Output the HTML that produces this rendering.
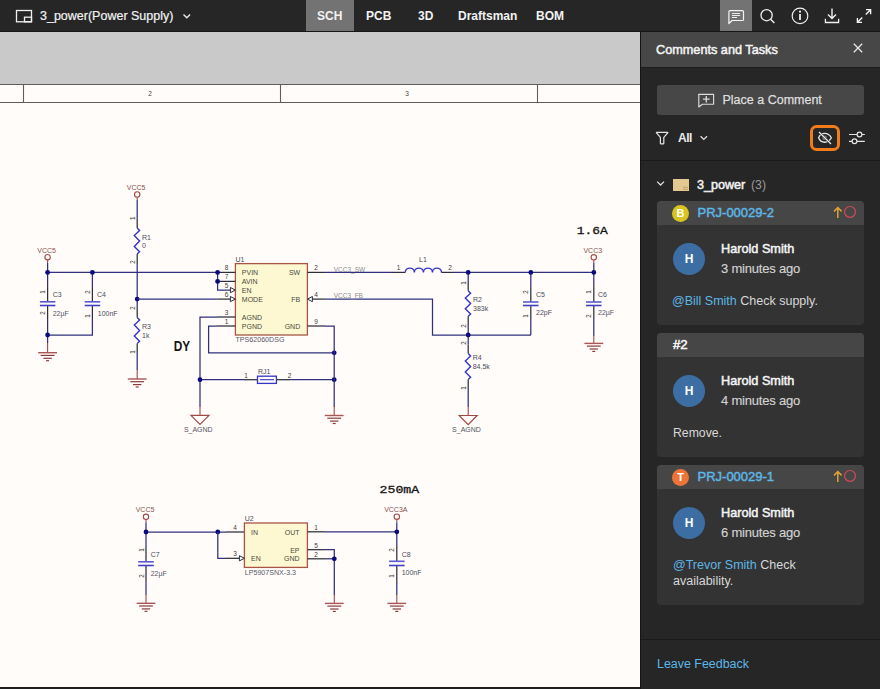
<!DOCTYPE html>
<html><head><meta charset="utf-8">
<style>
*{box-sizing:border-box;margin:0;padding:0}
html,body{width:880px;height:689px;overflow:hidden;background:#fffcf9;font-family:"Liberation Sans",sans-serif}
.a{position:absolute;white-space:nowrap}
#top{position:absolute;left:0;top:0;width:880px;height:32px;background:#262626;border-bottom:1px solid #151515}
#band{position:absolute;left:0;top:32px;width:640px;height:52px;background:#c9c9c9}
#panel{position:absolute;left:640px;top:32px;width:240px;height:657px;background:#262626;border-left:1px solid #141414}
#bot{position:absolute;left:0;top:687px;width:640px;height:2px;background:#1f1f1f}
.tab{position:absolute;top:1px;height:31px;line-height:31px;color:#f2f2f2;font-weight:bold;font-size:12px}
.card{position:absolute;left:657px;width:207px;background:#333;border-radius:4px;overflow:hidden}
.ch{height:24px;background:#464646;position:relative}
.av{position:absolute;width:32px;height:32px;border-radius:50%;background:#3d6ea3;color:#fff;font-weight:bold;font-size:12px;text-align:center;line-height:32px}
.nm{position:absolute;color:#f4f4f4;font-size:12.7px;-webkit-text-stroke:0.5px #f4f4f4}
.tm{position:absolute;color:#d2d2d2;font-size:13px;letter-spacing:-0.2px;-webkit-text-stroke:0.15px #d2d2d2}
.bd{position:absolute;color:#d8d8d8;font-size:12.5px}
.ln{color:#5db6e6}
</style></head><body>
<div id="top">
  <svg class="a" style="left:0;top:0" width="880" height="31" overflow="visible">
    <rect x="16.5" y="10.5" width="15" height="11.3" fill="none" stroke="#f0f0f0" stroke-width="1.3"/>
    <rect x="24.5" y="17.2" width="7" height="4.6" fill="none" stroke="#f0f0f0" stroke-width="1.3"/>
    <path d="M183.5 14.5 L186.8 17.8 L190.1 14.5" fill="none" stroke="#e8e8e8" stroke-width="1.4"/>
    <rect x="306" y="0" width="48" height="31" fill="#737373"/>
    <rect x="720" y="0" width="32" height="31" fill="#737373"/>
    <path d="M729.9 10.6 H742.4 Q743.5 10.6 743.5 11.7 V19.4 Q743.5 20.5 742.4 20.5 H732 L728.9 23.5 V11.7 Q728.9 10.6 729.9 10.6 Z" fill="none" stroke="#f4f4f4" stroke-width="1.2" stroke-linejoin="round"/>
    <path d="M731.9 13.5 H740.1 M731.9 15.5 H740.1 M731.9 17.5 H737" stroke="#f4f4f4" stroke-width="0.95"/>
    <circle cx="766.6" cy="15.2" r="5.6" fill="none" stroke="#f0f0f0" stroke-width="1.3"/>
    <path d="M770.6 19.2 L774.4 23" stroke="#f0f0f0" stroke-width="1.4"/>
    <circle cx="800" cy="15.9" r="7.8" fill="none" stroke="#f0f0f0" stroke-width="1.2"/>
    <rect x="799.1" y="14" width="1.8" height="6" fill="#f0f0f0"/>
    <circle cx="800" cy="11.7" r="1.1" fill="#f0f0f0"/>
    <path d="M832 8.5 V18.4 M828 14.6 L832 18.6 L836 14.6" fill="none" stroke="#f0f0f0" stroke-width="1.4"/>
    <path d="M825.4 18.8 V22.5 H838.6 V18.8" fill="none" stroke="#f0f0f0" stroke-width="1.3"/>
    <path d="M866 9.6 H870.6 V14.2 M870.2 10 L865.8 14.4 M857.4 18 V22.4 H862 M857.8 22 L862.3 17.5" fill="none" stroke="#f4f4f4" stroke-width="1.4"/>
  </svg>
  <div class="a" style="left:40px;top:1px;height:31px;line-height:31px;color:#f2f2f2;font-size:12.5px;-webkit-text-stroke:0.2px #f2f2f2">3_power(Power Supply)</div>
  <div class="tab" style="left:317px">SCH</div>
  <div class="tab" style="left:366px">PCB</div>
  <div class="tab" style="left:418px">3D</div>
  <div class="tab" style="left:458px">Draftsman</div>
  <div class="tab" style="left:536px">BOM</div>
</div>
<div id="band"></div>
<svg id="sch" class="a" style="left:0;top:0" width="640" height="689" font-family="Liberation Sans">
<path d="M0 84.5 H640 M0 102.5 H640 M23.5 84 V103 M280.5 84 V103 M537.5 84 V103" stroke="#5e5e5e" stroke-width="1.1" fill="none"/>
<text x="150.0" y="96.2" font-size="6.5" fill="#404040" text-anchor="middle" >2</text>
<text x="407.0" y="96.2" font-size="6.5" fill="#404040" text-anchor="middle" >3</text>
<circle cx="47.6" cy="257.2" r="2.7" fill="none" stroke="#a04a48" stroke-width="1.1"/>
<text x="46.6" y="252.6" font-size="7" fill="#8a5050" text-anchor="middle" >VCC5</text>
<path d="M47.6 259.9 L47.6 263.0" stroke="#a04a48" stroke-width="1.1" fill="none"/>
<path d="M47.6 263.0 L47.6 272.4" stroke="#30307e" stroke-width="1.25" fill="none"/>
<path d="M47.6 272.4 L217.6 272.4" stroke="#30307e" stroke-width="1.25" fill="none"/>
<path d="M47.6 272.4 L47.6 287.0" stroke="#30307e" stroke-width="1.25" fill="none"/>
<path d="M47.6 287.0 L47.6 301.8" stroke="#2e2e3a" stroke-width="1.25" fill="none"/>
<path d="M47.6 305.0 L47.6 319.0" stroke="#2e2e3a" stroke-width="1.25" fill="none"/>
<path d="M47.6 319.0 L47.6 343.0" stroke="#30307e" stroke-width="1.25" fill="none"/>
<path d="M47.6 343.0 L47.6 352.7" stroke="#a04a48" stroke-width="1.1" fill="none"/>
<path d="M39.9 301.8 L55.4 301.8" stroke="#5a5ad0" stroke-width="1.6" fill="none"/>
<path d="M39.9 305.5 L55.4 305.5" stroke="#4040c0" stroke-width="1.6" fill="none"/>
<path d="M38.2 352.7 L57.0 352.7" stroke="#a85656" stroke-width="1.4" fill="none"/>
<path d="M40.7 355.4 L54.5 355.4" stroke="#8a3c3c" stroke-width="1.2" fill="none"/>
<path d="M43.4 358.3 L51.8 358.3" stroke="#8a3c3c" stroke-width="1.2" fill="none"/>
<path d="M46.1 360.7 L49.1 360.7" stroke="#8a3c3c" stroke-width="1.2" fill="none"/>
<path d="M92.4 272.4 L92.4 287.0" stroke="#30307e" stroke-width="1.25" fill="none"/>
<path d="M92.4 287.0 L92.4 301.8" stroke="#2e2e3a" stroke-width="1.25" fill="none"/>
<path d="M92.4 305.0 L92.4 319.0" stroke="#2e2e3a" stroke-width="1.25" fill="none"/>
<path d="M92.4 319.0 L92.4 335.0 L47.6 335.0" stroke="#30307e" stroke-width="1.25" fill="none"/>
<path d="M84.7 301.8 L100.2 301.8" stroke="#5a5ad0" stroke-width="1.6" fill="none"/>
<path d="M84.7 305.5 L100.2 305.5" stroke="#4040c0" stroke-width="1.6" fill="none"/>
<circle cx="47.6" cy="272.4" r="2.4" fill="#0a0a80"/>
<circle cx="92.4" cy="272.4" r="2.4" fill="#0a0a80"/>
<circle cx="47.6" cy="335.0" r="2.4" fill="#0a0a80"/>
<text x="52.7" y="296.7" font-size="7" fill="#4d4d5a" text-anchor="start" >C3</text>
<text x="52.7" y="316.0" font-size="7" fill="#556" text-anchor="start" >22µF</text>
<text x="97.0" y="296.7" font-size="7" fill="#4d4d5a" text-anchor="start" >C4</text>
<text x="97.8" y="316.0" font-size="7" fill="#4d4d5a" text-anchor="start" >100nF</text>
<text x="0" y="0" font-size="6.3" fill="#3c3c3c" transform="translate(45.0,292.0) rotate(-90)" text-anchor="middle">1</text>
<text x="0" y="0" font-size="6.3" fill="#3c3c3c" transform="translate(45.0,313.0) rotate(-90)" text-anchor="middle">2</text>
<text x="0" y="0" font-size="6.3" fill="#3c3c3c" transform="translate(90.0,292.0) rotate(-90)" text-anchor="middle">2</text>
<text x="0" y="0" font-size="6.3" fill="#3c3c3c" transform="translate(90.0,316.0) rotate(-90)" text-anchor="middle">1</text>
<circle cx="137.2" cy="194.5" r="2.7" fill="none" stroke="#a04a48" stroke-width="1.1"/>
<text x="136.2" y="189.9" font-size="7" fill="#8a5050" text-anchor="middle" >VCC5</text>
<path d="M137.2 197.2 L137.2 200.0" stroke="#a04a48" stroke-width="1.1" fill="none"/>
<path d="M137.2 200.0 L137.2 218.3" stroke="#30307e" stroke-width="1.25" fill="none"/>
<path d="M137.2 218.3 L137.2 228.0" stroke="#2e2e3a" stroke-width="1.25" fill="none"/>
<path d="M137.2 228.0 L139.6 230.5 L134.3 235.5 L139.6 241.0 L134.3 246.4 L139.6 251.7 L137.2 254.0" stroke="#3434c8" stroke-width="1.4" fill="none"/>
<path d="M137.2 254.0 L137.2 264.0" stroke="#2e2e3a" stroke-width="1.25" fill="none"/>
<path d="M137.2 264.0 L137.2 307.0" stroke="#30307e" stroke-width="1.25" fill="none"/>
<text x="142.0" y="239.5" font-size="7" fill="#4d4d5a" text-anchor="start" >R1</text>
<text x="142.0" y="247.7" font-size="7" fill="#4d4d5a" text-anchor="start" >0</text>
<text x="0" y="0" font-size="6.3" fill="#3c3c3c" transform="translate(134.5,218.3) rotate(-90)" text-anchor="middle">1</text>
<text x="0" y="0" font-size="6.3" fill="#3c3c3c" transform="translate(134.5,262.0) rotate(-90)" text-anchor="middle">2</text>
<path d="M137.2 307.0 L137.2 317.6" stroke="#2e2e3a" stroke-width="1.25" fill="none"/>
<path d="M137.2 317.6 L139.6 320.1 L134.3 325.1 L139.6 330.6 L134.3 336.0 L139.6 341.3 L137.2 343.6" stroke="#3434c8" stroke-width="1.4" fill="none"/>
<path d="M137.2 343.6 L137.2 353.0" stroke="#2e2e3a" stroke-width="1.25" fill="none"/>
<path d="M137.2 353.0 L137.2 370.0" stroke="#30307e" stroke-width="1.25" fill="none"/>
<path d="M137.2 370.0 L137.2 379.0" stroke="#a04a48" stroke-width="1.1" fill="none"/>
<path d="M127.8 379.0 L146.6 379.0" stroke="#a85656" stroke-width="1.4" fill="none"/>
<path d="M130.3 381.7 L144.1 381.7" stroke="#8a3c3c" stroke-width="1.2" fill="none"/>
<path d="M133.0 384.6 L141.4 384.6" stroke="#8a3c3c" stroke-width="1.2" fill="none"/>
<path d="M135.7 387.0 L138.7 387.0" stroke="#8a3c3c" stroke-width="1.2" fill="none"/>
<circle cx="137.2" cy="299.1" r="2.4" fill="#0a0a80"/>
<path d="M137.2 299.1 L217.3 299.1" stroke="#30307e" stroke-width="1.25" fill="none"/>
<text x="142.0" y="329.0" font-size="7" fill="#4d4d5a" text-anchor="start" >R3</text>
<text x="142.0" y="338.0" font-size="7" fill="#4d4d5a" text-anchor="start" >1k</text>
<text x="0" y="0" font-size="6.3" fill="#3c3c3c" transform="translate(134.5,308.0) rotate(-90)" text-anchor="middle">2</text>
<text x="0" y="0" font-size="6.3" fill="#3c3c3c" transform="translate(134.5,352.0) rotate(-90)" text-anchor="middle">1</text>
<rect x="235.4" y="263.6" width="72.0" height="71.4" fill="#fdf8d2" stroke="#a85545" stroke-width="1.3"/>
<text x="235.5" y="262.0" font-size="7" fill="#4d4d5a" text-anchor="start" >U1</text>
<text x="235.5" y="342.3" font-size="7.1" fill="#5a5a6a" text-anchor="start" >TPS62060DSG</text>
<text x="241.8" y="275.0" font-size="7" fill="#4a4a40" text-anchor="start" >PVIN</text>
<text x="226.5" y="270.2" font-size="6.5" fill="#3c3c3c" text-anchor="middle" >8</text>
<text x="241.8" y="284.0" font-size="7" fill="#4a4a40" text-anchor="start" >AVIN</text>
<text x="226.5" y="279.2" font-size="6.5" fill="#3c3c3c" text-anchor="middle" >7</text>
<text x="241.8" y="292.7" font-size="7" fill="#4a4a40" text-anchor="start" >EN</text>
<text x="226.5" y="287.9" font-size="6.5" fill="#3c3c3c" text-anchor="middle" >5</text>
<text x="241.8" y="301.7" font-size="7" fill="#4a4a40" text-anchor="start" >MODE</text>
<text x="226.5" y="296.9" font-size="6.5" fill="#3c3c3c" text-anchor="middle" >6</text>
<text x="241.8" y="319.6" font-size="7" fill="#4a4a40" text-anchor="start" >AGND</text>
<text x="226.5" y="314.8" font-size="6.5" fill="#3c3c3c" text-anchor="middle" >3</text>
<text x="241.8" y="328.6" font-size="7" fill="#4a4a40" text-anchor="start" >PGND</text>
<text x="226.5" y="323.8" font-size="6.5" fill="#3c3c3c" text-anchor="middle" >1</text>
<text x="300.2" y="275.0" font-size="7" fill="#4a4a40" text-anchor="end" >SW</text>
<text x="316.0" y="270.2" font-size="6.5" fill="#3c3c3c" text-anchor="middle" >2</text>
<text x="300.2" y="301.7" font-size="7" fill="#4a4a40" text-anchor="end" >FB</text>
<text x="316.0" y="296.9" font-size="6.5" fill="#3c3c3c" text-anchor="middle" >4</text>
<text x="300.2" y="328.6" font-size="7" fill="#4a4a40" text-anchor="end" >GND</text>
<text x="316.0" y="323.8" font-size="6.5" fill="#3c3c3c" text-anchor="middle" >9</text>
<path d="M217.6 272.4 L235.4 272.4" stroke="#2e2e3a" stroke-width="1.25" fill="none"/>
<path d="M217.6 281.4 L235.4 281.4" stroke="#2e2e3a" stroke-width="1.25" fill="none"/>
<path d="M217.6 272.4 L217.6 290.1 L230.4 290.1" stroke="#30307e" stroke-width="1.25" fill="none"/>
<path d="M230.4 287.5 L235.4 290.1 L230.4 292.7 Z" fill="#fffcf8" stroke="#2e2e3a" stroke-width="1"/>
<path d="M217.3 299.1 L230.4 299.1" stroke="#2e2e3a" stroke-width="1.25" fill="none"/>
<path d="M230.4 296.5 L235.4 299.1 L230.4 301.7 Z" fill="#fffcf8" stroke="#2e2e3a" stroke-width="1"/>
<circle cx="217.6" cy="272.4" r="2.4" fill="#0a0a80"/>
<circle cx="217.6" cy="281.4" r="2.4" fill="#0a0a80"/>
<path d="M235.4 317.0 L217.0 317.0" stroke="#2e2e3a" stroke-width="1.25" fill="none"/>
<path d="M217.0 317.0 L200.0 317.0 L200.0 407.0" stroke="#30307e" stroke-width="1.25" fill="none"/>
<path d="M200.0 407.0 L200.0 415.3" stroke="#a04a48" stroke-width="1.1" fill="none"/>
<path d="M191.0 415.3 L209.0 415.3 L200.0 424.5 Z" fill="none" stroke="#a04a48" stroke-width="1.2"/>
<text x="198.3" y="432.1" font-size="7" fill="#555566" text-anchor="middle" >S_AGND</text>
<path d="M235.4 326.0 L217.0 326.0" stroke="#2e2e3a" stroke-width="1.25" fill="none"/>
<path d="M217.0 326.0 L208.6 326.0 L208.6 352.8 L334.2 352.8" stroke="#30307e" stroke-width="1.25" fill="none"/>
<path d="M200.0 379.7 L244.0 379.7" stroke="#30307e" stroke-width="1.25" fill="none"/>
<path d="M244.0 379.7 L257.5 379.7" stroke="#2e2e3a" stroke-width="1.25" fill="none"/>
<path d="M276.4 379.7 L290.0 379.7" stroke="#2e2e3a" stroke-width="1.25" fill="none"/>
<path d="M290.0 379.7 L334.2 379.7" stroke="#30307e" stroke-width="1.25" fill="none"/>
<rect x="257.5" y="376.2" width="18.9" height="7.2" fill="none" stroke="#3434c8" stroke-width="1.3"/>
<path d="M260.0 379.7 L274.0 379.7" stroke="#3434c8" stroke-width="1.1" fill="none"/>
<text x="258.0" y="373.8" font-size="7" fill="#4d4d5a" text-anchor="start" >RJ1</text>
<text x="246.0" y="377.5" font-size="6.5" fill="#3c3c3c" text-anchor="middle" >1</text>
<text x="289.5" y="377.5" font-size="6.5" fill="#3c3c3c" text-anchor="middle" >2</text>
<circle cx="200.0" cy="379.7" r="2.4" fill="#0a0a80"/>
<circle cx="334.2" cy="379.7" r="2.4" fill="#0a0a80"/>
<circle cx="334.2" cy="352.8" r="2.4" fill="#0a0a80"/>
<path d="M307.4 326.0 L325.0 326.0" stroke="#2e2e3a" stroke-width="1.25" fill="none"/>
<path d="M325.0 326.0 L334.2 326.0 L334.2 407.0" stroke="#30307e" stroke-width="1.25" fill="none"/>
<path d="M334.2 407.0 L334.2 415.5" stroke="#a04a48" stroke-width="1.1" fill="none"/>
<path d="M324.8 415.5 L343.6 415.5" stroke="#a85656" stroke-width="1.4" fill="none"/>
<path d="M327.3 418.2 L341.1 418.2" stroke="#8a3c3c" stroke-width="1.2" fill="none"/>
<path d="M330.0 421.1 L338.4 421.1" stroke="#8a3c3c" stroke-width="1.2" fill="none"/>
<path d="M332.7 423.5 L335.7 423.5" stroke="#8a3c3c" stroke-width="1.2" fill="none"/>
<path d="M307.4 272.4 L325.0 272.4" stroke="#2e2e3a" stroke-width="1.25" fill="none"/>
<path d="M325.0 272.4 L393.0 272.4" stroke="#30307e" stroke-width="1.25" fill="none"/>
<path d="M393.0 272.4 L405.3 272.4" stroke="#2e2e3a" stroke-width="1.25" fill="none"/>
<path d="M405.3 272.4 A4.52 4.30 0 0 1 414.35 272.4 A4.52 4.30 0 0 1 423.40 272.4 A4.52 4.30 0 0 1 432.45 272.4 A4.52 4.30 0 0 1 441.50 272.4" stroke="#3434c8" stroke-width="1.4" fill="none"/>
<path d="M441.5 272.4 L453.0 272.4" stroke="#2e2e3a" stroke-width="1.25" fill="none"/>
<path d="M453.0 272.4 L593.8 272.4" stroke="#30307e" stroke-width="1.25" fill="none"/>
<text x="419.0" y="262.0" font-size="7" fill="#4d4d5a" text-anchor="start" >L1</text>
<text x="398.5" y="270.0" font-size="6.5" fill="#3c3c3c" text-anchor="middle" >1</text>
<text x="450.0" y="270.0" font-size="6.5" fill="#3c3c3c" text-anchor="middle" >2</text>
<text x="333.7" y="271.5" font-size="6.5" fill="#8c8c90" text-anchor="start" >VCC3_SW</text>
<path d="M312.4 296.5 L307.4 299.1 L312.4 301.7 Z" fill="#fffcf8" stroke="#2e2e3a" stroke-width="1"/>
<path d="M312.4 299.1 L325.0 299.1" stroke="#2e2e3a" stroke-width="1.25" fill="none"/>
<path d="M325.0 299.1 L432.5 299.1 L432.5 335.0 L531.0 335.0" stroke="#30307e" stroke-width="1.25" fill="none"/>
<text x="333.7" y="298.0" font-size="6.5" fill="#8c8c90" text-anchor="start" >VCC3_FB</text>
<path d="M468.2 272.4 L468.2 281.0" stroke="#30307e" stroke-width="1.25" fill="none"/>
<path d="M468.2 281.0 L468.2 290.7" stroke="#2e2e3a" stroke-width="1.25" fill="none"/>
<path d="M468.2 290.7 L470.6 293.2 L465.3 298.1 L470.6 303.5 L465.3 308.8 L470.6 314.0 L468.2 316.3" stroke="#3434c8" stroke-width="1.4" fill="none"/>
<path d="M468.2 316.3 L468.2 326.0" stroke="#2e2e3a" stroke-width="1.25" fill="none"/>
<path d="M468.2 326.0 L468.2 344.5" stroke="#30307e" stroke-width="1.25" fill="none"/>
<text x="473.0" y="302.0" font-size="7" fill="#4d4d5a" text-anchor="start" >R2</text>
<text x="473.0" y="311.0" font-size="7" fill="#4d4d5a" text-anchor="start" >383k</text>
<text x="0" y="0" font-size="6.3" fill="#3c3c3c" transform="translate(465.5,283.0) rotate(-90)" text-anchor="middle">1</text>
<text x="0" y="0" font-size="6.3" fill="#3c3c3c" transform="translate(465.5,326.0) rotate(-90)" text-anchor="middle">2</text>
<path d="M468.2 344.5 L468.2 353.6" stroke="#2e2e3a" stroke-width="1.25" fill="none"/>
<path d="M468.2 353.6 L470.6 356.1 L465.3 361.1 L470.6 366.6 L465.3 371.9 L470.6 377.2 L468.2 379.5" stroke="#3434c8" stroke-width="1.4" fill="none"/>
<path d="M468.2 379.5 L468.2 389.0" stroke="#2e2e3a" stroke-width="1.25" fill="none"/>
<path d="M468.2 389.0 L468.2 407.0" stroke="#30307e" stroke-width="1.25" fill="none"/>
<path d="M468.2 407.0 L468.2 415.5" stroke="#a04a48" stroke-width="1.1" fill="none"/>
<path d="M459.2 415.5 L477.2 415.5 L468.2 424.7 Z" fill="none" stroke="#a04a48" stroke-width="1.2"/>
<text x="466.5" y="432.3" font-size="7" fill="#555566" text-anchor="middle" >S_AGND</text>
<text x="472.7" y="360.0" font-size="7" fill="#4d4d5a" text-anchor="start" >R4</text>
<text x="472.7" y="369.0" font-size="7" fill="#4d4d5a" text-anchor="start" >84.5k</text>
<text x="0" y="0" font-size="6.3" fill="#3c3c3c" transform="translate(465.5,343.0) rotate(-90)" text-anchor="middle">2</text>
<text x="0" y="0" font-size="6.3" fill="#3c3c3c" transform="translate(465.5,388.0) rotate(-90)" text-anchor="middle">1</text>
<circle cx="468.2" cy="272.4" r="2.4" fill="#0a0a80"/>
<circle cx="468.2" cy="335.0" r="2.4" fill="#0a0a80"/>
<path d="M530.8 272.4 L530.8 287.0" stroke="#30307e" stroke-width="1.25" fill="none"/>
<path d="M530.8 287.0 L530.8 302.0" stroke="#2e2e3a" stroke-width="1.25" fill="none"/>
<path d="M530.8 305.0 L530.8 319.0" stroke="#2e2e3a" stroke-width="1.25" fill="none"/>
<path d="M530.8 319.0 L530.8 335.0" stroke="#30307e" stroke-width="1.25" fill="none"/>
<path d="M523.0 302.0 L538.5 302.0" stroke="#5a5ad0" stroke-width="1.6" fill="none"/>
<path d="M523.0 305.5 L538.5 305.5" stroke="#4040c0" stroke-width="1.6" fill="none"/>
<text x="536.0" y="297.0" font-size="7" fill="#4d4d5a" text-anchor="start" >C5</text>
<text x="536.0" y="315.0" font-size="7" fill="#4d4d5a" text-anchor="start" >22pF</text>
<text x="0" y="0" font-size="6.3" fill="#3c3c3c" transform="translate(528.0,292.0) rotate(-90)" text-anchor="middle">2</text>
<text x="0" y="0" font-size="6.3" fill="#3c3c3c" transform="translate(528.0,316.0) rotate(-90)" text-anchor="middle">1</text>
<circle cx="530.8" cy="272.4" r="2.4" fill="#0a0a80"/>
<circle cx="593.8" cy="257.3" r="2.7" fill="none" stroke="#a04a48" stroke-width="1.1"/>
<text x="592.8" y="252.7" font-size="7" fill="#8a5050" text-anchor="middle" >VCC3</text>
<path d="M593.8 260.0 L593.8 263.0" stroke="#a04a48" stroke-width="1.1" fill="none"/>
<path d="M593.8 263.0 L593.8 287.0" stroke="#30307e" stroke-width="1.25" fill="none"/>
<path d="M593.8 287.0 L593.8 302.0" stroke="#2e2e3a" stroke-width="1.25" fill="none"/>
<path d="M593.8 305.0 L593.8 319.0" stroke="#2e2e3a" stroke-width="1.25" fill="none"/>
<path d="M593.8 319.0 L593.8 336.0" stroke="#30307e" stroke-width="1.25" fill="none"/>
<path d="M593.8 336.0 L593.8 343.4" stroke="#a04a48" stroke-width="1.1" fill="none"/>
<path d="M586.0 302.0 L601.5 302.0" stroke="#5a5ad0" stroke-width="1.6" fill="none"/>
<path d="M586.0 305.5 L601.5 305.5" stroke="#4040c0" stroke-width="1.6" fill="none"/>
<path d="M584.4 343.4 L603.2 343.4" stroke="#a85656" stroke-width="1.4" fill="none"/>
<path d="M586.9 346.1 L600.7 346.1" stroke="#8a3c3c" stroke-width="1.2" fill="none"/>
<path d="M589.6 349.0 L598.0 349.0" stroke="#8a3c3c" stroke-width="1.2" fill="none"/>
<path d="M592.3 351.4 L595.3 351.4" stroke="#8a3c3c" stroke-width="1.2" fill="none"/>
<text x="598.0" y="297.0" font-size="7" fill="#4d4d5a" text-anchor="start" >C6</text>
<text x="598.0" y="315.0" font-size="7" fill="#556" text-anchor="start" >22µF</text>
<text x="0" y="0" font-size="6.3" fill="#3c3c3c" transform="translate(591.0,292.0) rotate(-90)" text-anchor="middle">1</text>
<text x="0" y="0" font-size="6.3" fill="#3c3c3c" transform="translate(591.0,316.0) rotate(-90)" text-anchor="middle">2</text>
<circle cx="593.8" cy="272.4" r="2.4" fill="#0a0a80"/>
<text x="0" y="0" font-size="13.3" fill="#151515" stroke="#151515" stroke-width="0.35" font-family="Liberation Mono" transform="translate(576.7,234) scale(0.97,0.85)">1.6A</text>
<text x="0" y="0" font-size="13.8" fill="#151515" font-weight="bold" transform="translate(173.8,351.2) scale(0.86,1)">DY</text>
<circle cx="146.0" cy="516.8" r="2.7" fill="none" stroke="#a04a48" stroke-width="1.1"/>
<text x="145.0" y="512.2" font-size="7" fill="#8a5050" text-anchor="middle" >VCC5</text>
<path d="M146.0 519.5 L146.0 522.5" stroke="#a04a48" stroke-width="1.1" fill="none"/>
<path d="M146.0 522.5 L146.0 546.0" stroke="#30307e" stroke-width="1.25" fill="none"/>
<path d="M146.0 546.0 L146.0 561.8" stroke="#2e2e3a" stroke-width="1.25" fill="none"/>
<path d="M146.0 565.0 L146.0 581.0" stroke="#2e2e3a" stroke-width="1.25" fill="none"/>
<path d="M146.0 581.0 L146.0 595.0" stroke="#30307e" stroke-width="1.25" fill="none"/>
<path d="M146.0 595.0 L146.0 603.3" stroke="#a04a48" stroke-width="1.1" fill="none"/>
<path d="M138.2 561.8 L153.8 561.8" stroke="#5a5ad0" stroke-width="1.6" fill="none"/>
<path d="M138.2 565.5 L153.8 565.5" stroke="#4040c0" stroke-width="1.6" fill="none"/>
<path d="M136.6 603.3 L155.4 603.3" stroke="#a85656" stroke-width="1.4" fill="none"/>
<path d="M139.1 606.0 L152.9 606.0" stroke="#8a3c3c" stroke-width="1.2" fill="none"/>
<path d="M141.8 608.9 L150.2 608.9" stroke="#8a3c3c" stroke-width="1.2" fill="none"/>
<path d="M144.5 611.3 L147.5 611.3" stroke="#8a3c3c" stroke-width="1.2" fill="none"/>
<path d="M146.0 532.0 L226.0 532.0" stroke="#30307e" stroke-width="1.25" fill="none"/>
<path d="M226.0 532.0 L244.4 532.0" stroke="#2e2e3a" stroke-width="1.25" fill="none"/>
<circle cx="146.0" cy="532.0" r="2.4" fill="#0a0a80"/>
<circle cx="217.8" cy="532.0" r="2.4" fill="#0a0a80"/>
<text x="150.7" y="557.0" font-size="7" fill="#4d4d5a" text-anchor="start" >C7</text>
<text x="150.7" y="576.0" font-size="7" fill="#556" text-anchor="start" >22µF</text>
<text x="0" y="0" font-size="6.3" fill="#3c3c3c" transform="translate(143.5,550.0) rotate(-90)" text-anchor="middle">1</text>
<text x="0" y="0" font-size="6.3" fill="#3c3c3c" transform="translate(143.5,576.0) rotate(-90)" text-anchor="middle">2</text>
<rect x="244.4" y="523.0" width="63.0" height="44.4" fill="#fdf8d2" stroke="#a85545" stroke-width="1.3"/>
<text x="244.8" y="521.0" font-size="7" fill="#4d4d5a" text-anchor="start" >U2</text>
<text x="244.8" y="575.2" font-size="7.1" fill="#5a5a6a" text-anchor="start" >LP5907SNX-3.3</text>
<text x="251.0" y="535.0" font-size="7" fill="#4a4a40" text-anchor="start" >IN</text>
<text x="251.0" y="561.0" font-size="7" fill="#4a4a40" text-anchor="start" >EN</text>
<text x="299.5" y="535.0" font-size="7" fill="#4a4a40" text-anchor="end" >OUT</text>
<text x="299.5" y="553.0" font-size="7" fill="#4a4a40" text-anchor="end" >EP</text>
<text x="299.5" y="561.0" font-size="7" fill="#4a4a40" text-anchor="end" >GND</text>
<text x="235.0" y="529.8" font-size="6.5" fill="#3c3c3c" text-anchor="middle" >4</text>
<text x="235.0" y="556.1" font-size="6.5" fill="#3c3c3c" text-anchor="middle" >3</text>
<text x="316.0" y="529.6" font-size="6.5" fill="#3c3c3c" text-anchor="middle" >1</text>
<text x="316.0" y="547.5" font-size="6.5" fill="#3c3c3c" text-anchor="middle" >5</text>
<text x="316.0" y="556.6" font-size="6.5" fill="#3c3c3c" text-anchor="middle" >2</text>
<path d="M217.8 532.0 L217.8 558.3 L226.0 558.3" stroke="#30307e" stroke-width="1.25" fill="none"/>
<path d="M226.0 558.3 L239.4 558.3" stroke="#2e2e3a" stroke-width="1.25" fill="none"/>
<path d="M239.4 555.7 L244.4 558.3 L239.4 560.9 Z" fill="#fffcf8" stroke="#2e2e3a" stroke-width="1"/>
<path d="M307.4 531.8 L325.0 531.8" stroke="#2e2e3a" stroke-width="1.25" fill="none"/>
<path d="M325.0 531.8 L396.8 531.8" stroke="#30307e" stroke-width="1.25" fill="none"/>
<path d="M307.4 549.7 L325.0 549.7" stroke="#2e2e3a" stroke-width="1.25" fill="none"/>
<path d="M325.0 549.7 L334.3 549.7 L334.3 595.0" stroke="#30307e" stroke-width="1.25" fill="none"/>
<path d="M334.3 595.0 L334.3 603.4" stroke="#a04a48" stroke-width="1.1" fill="none"/>
<path d="M307.4 558.8 L325.0 558.8" stroke="#2e2e3a" stroke-width="1.25" fill="none"/>
<path d="M325.0 558.8 L334.3 558.8" stroke="#30307e" stroke-width="1.25" fill="none"/>
<circle cx="334.3" cy="558.8" r="2.4" fill="#0a0a80"/>
<path d="M324.9 603.4 L343.7 603.4" stroke="#a85656" stroke-width="1.4" fill="none"/>
<path d="M327.4 606.1 L341.2 606.1" stroke="#8a3c3c" stroke-width="1.2" fill="none"/>
<path d="M330.1 609.0 L338.5 609.0" stroke="#8a3c3c" stroke-width="1.2" fill="none"/>
<path d="M332.8 611.4 L335.8 611.4" stroke="#8a3c3c" stroke-width="1.2" fill="none"/>
<circle cx="396.8" cy="516.7" r="2.7" fill="none" stroke="#a04a48" stroke-width="1.1"/>
<text x="395.8" y="512.1" font-size="7" fill="#8a5050" text-anchor="middle" >VCC3A</text>
<path d="M396.8 519.4 L396.8 522.5" stroke="#a04a48" stroke-width="1.1" fill="none"/>
<path d="M396.8 522.5 L396.8 546.0" stroke="#30307e" stroke-width="1.25" fill="none"/>
<path d="M396.8 546.0 L396.8 561.3" stroke="#2e2e3a" stroke-width="1.25" fill="none"/>
<path d="M396.8 565.0 L396.8 581.0" stroke="#2e2e3a" stroke-width="1.25" fill="none"/>
<path d="M396.8 581.0 L396.8 595.0" stroke="#30307e" stroke-width="1.25" fill="none"/>
<path d="M396.8 595.0 L396.8 603.4" stroke="#a04a48" stroke-width="1.1" fill="none"/>
<path d="M389.1 561.3 L404.6 561.3" stroke="#5a5ad0" stroke-width="1.6" fill="none"/>
<path d="M389.1 565.5 L404.6 565.5" stroke="#4040c0" stroke-width="1.6" fill="none"/>
<path d="M387.4 603.4 L406.2 603.4" stroke="#a85656" stroke-width="1.4" fill="none"/>
<path d="M389.9 606.1 L403.7 606.1" stroke="#8a3c3c" stroke-width="1.2" fill="none"/>
<path d="M392.6 609.0 L401.0 609.0" stroke="#8a3c3c" stroke-width="1.2" fill="none"/>
<path d="M395.3 611.4 L398.3 611.4" stroke="#8a3c3c" stroke-width="1.2" fill="none"/>
<circle cx="396.8" cy="531.8" r="2.4" fill="#0a0a80"/>
<text x="401.7" y="557.0" font-size="7" fill="#4d4d5a" text-anchor="start" >C8</text>
<text x="401.7" y="575.0" font-size="7" fill="#4d4d5a" text-anchor="start" >100nF</text>
<text x="0" y="0" font-size="6.3" fill="#3c3c3c" transform="translate(394.0,550.0) rotate(-90)" text-anchor="middle">2</text>
<text x="0" y="0" font-size="6.3" fill="#3c3c3c" transform="translate(394.0,576.0) rotate(-90)" text-anchor="middle">1</text>
<text x="0" y="0" font-size="13.4" fill="#151515" stroke="#151515" stroke-width="0.35" font-family="Liberation Mono" transform="translate(379.5,493.2) scale(0.99,0.87)">250mA</text>
</svg>
<div id="panel"></div>
<div class="a" style="left:641px;top:32px;width:239px;height:36px;background:#474747;border-bottom:1px solid #1c1c1c"></div>
<div class="a" style="left:656px;top:41.5px;color:#f2f2f2;font-size:12.7px;line-height:16px;-webkit-text-stroke:0.5px #f2f2f2">Comments and Tasks</div>
<svg class="a" style="left:848px;top:38px" width="20" height="20"><path d="M5.8 5.8 L14.2 14.2 M14.2 5.8 L5.8 14.2" stroke="#e6e6e6" stroke-width="1.3" fill="none"/></svg>
<div class="a" style="left:657px;top:85px;width:207px;height:30px;background:#474747;border-radius:3px"></div>
<svg class="a" style="left:690px;top:88px" width="30" height="24">
  <path d="M8.6 6.4 H23.6 V16.2 H12.4 L8.8 19 V6.4 Z" fill="none" stroke="#dcdcdc" stroke-width="1.15" stroke-linejoin="round"/>
  <path d="M16.3 7.9 V14.5 M13 11.2 H19.6" stroke="#dcdcdc" stroke-width="1.3"/>
</svg>
<div class="a" style="left:722.5px;top:92px;color:#dedede;font-size:12.5px;line-height:16px;-webkit-text-stroke:0.25px #dedede">Place a Comment</div>
<svg class="a" style="left:650px;top:126px" width="70" height="24">
  <path d="M6.6 6.4 H17.6 Q18 6.4 17.7 6.9 L13.8 11.4 V17.3 Q13.8 17.9 13.2 17.9 H11 Q10.4 17.9 10.4 17.3 V11.4 L6.5 6.9 Q6.2 6.4 6.6 6.4 Z" fill="none" stroke="#e6e6e6" stroke-width="1.2" stroke-linejoin="round"/>
  <path d="M50.6 10.2 L53.8 13.4 L57 10.2" fill="none" stroke="#e0e0e0" stroke-width="1.3"/>
</svg>
<div class="a" style="left:678px;top:129.5px;color:#ececec;font-weight:bold;font-size:12px;line-height:16px;letter-spacing:-0.5px">All</div>
<div class="a" style="left:810px;top:124.7px;width:30px;height:26.2px;border:3.4px solid #f27c1c;border-radius:6.5px"></div>
<svg class="a" style="left:810px;top:125px" width="60" height="26">
  <path d="M8.6 12.8 C10.8 6.9, 18.2 6.9, 21.4 12.8 C18.2 18.7, 10.8 18.7, 8.6 12.8 Z" fill="none" stroke="#e8e8e8" stroke-width="1.3"/>
  <circle cx="14.6" cy="12.7" r="2.3" fill="#8a8a8a"/>
  <path d="M9 7 L21 19" stroke="#262626" stroke-width="2.4"/>
  <path d="M9 7 L21 19" stroke="#ececec" stroke-width="1.2"/>
  <path d="M39 9.5 H54.8 M39 16.3 H54.8" stroke="#e4e4e4" stroke-width="1.2"/>
  <circle cx="49.5" cy="9.5" r="2.4" fill="#262626" stroke="#e4e4e4" stroke-width="1.2"/>
  <circle cx="44.5" cy="16.3" r="2.4" fill="#262626" stroke="#e4e4e4" stroke-width="1.2"/>
</svg>
<div class="a" style="left:641px;top:160px;width:239px;height:1px;background:#1a1a1a"></div>

<svg class="a" style="left:650px;top:172px" width="50" height="26">
  <path d="M7.2 9.6 L10.6 13 L14 9.6" fill="none" stroke="#e0e0e0" stroke-width="1.3"/>
  <rect x="23" y="7" width="16" height="12" fill="#e3c88f"/>
  <path d="M33 15.3 H38 M33 17.3 H38" stroke="#b89a60" stroke-width="0.8"/>
</svg>
<div class="a" style="left:697px;top:176.5px;color:#f2f2f2;font-size:12.6px;line-height:16px;-webkit-text-stroke:0.5px #f2f2f2">3_power</div>
<div class="a" style="left:751px;top:177px;color:#9a9a9a;font-size:12.3px;line-height:16px">(3)</div>

<div class="card" style="top:201px;height:124px">
  <div class="ch"></div>
</div>
<div class="a" style="left:672px;top:205px;width:17px;height:17px;border-radius:50%;background:#d9c31f;color:#fff;font-weight:bold;font-size:11px;line-height:17px;text-align:center">B</div>
<div class="a ln" style="left:697.5px;top:204.5px;font-size:13px;line-height:16px;-webkit-text-stroke:0.45px #5db6e6">PRJ-00029-2</div>
<svg class="a" style="left:830px;top:204px" width="30" height="18">
  <path d="M7.8 14 V3.8 M4 7.4 L7.8 3.6 L11.6 7.4" fill="none" stroke="#dba23a" stroke-width="1.5"/>
  <circle cx="20" cy="7.9" r="5.4" fill="none" stroke="#d9485a" stroke-width="1.2"/>
</svg>
<div class="av" style="left:673px;top:243px">H</div>
<div class="nm" style="left:721px;top:241px;line-height:16px">Harold Smith</div>
<div class="tm" style="left:721px;top:261px;line-height:16px">3 minutes ago</div>
<div class="bd" style="left:672px;top:292.6px;line-height:16px"><span class="ln">@Bill Smith</span> Check supply.</div>

<div class="card" style="top:333px;height:124px">
  <div class="ch"></div>
</div>
<div class="a" style="left:673px;top:336.5px;color:#f4f4f4;font-size:13.2px;line-height:16px;-webkit-text-stroke:0.55px #f4f4f4">#2</div>
<div class="av" style="left:673px;top:375px">H</div>
<div class="nm" style="left:721px;top:373px;line-height:16px">Harold Smith</div>
<div class="tm" style="left:721px;top:393px;line-height:16px">4 minutes ago</div>
<div class="bd" style="left:673px;top:424.8px;line-height:16px;font-size:12.25px">Remove.</div>

<div class="card" style="top:465px;height:140px">
  <div class="ch"></div>
</div>
<div class="a" style="left:672px;top:469px;width:17px;height:17px;border-radius:50%;background:#ec7436;color:#fff;font-weight:bold;font-size:11px;line-height:17px;text-align:center">T</div>
<div class="a ln" style="left:697.5px;top:468.5px;font-size:13px;line-height:16px;-webkit-text-stroke:0.45px #5db6e6">PRJ-00029-1</div>
<svg class="a" style="left:830px;top:468px" width="30" height="18">
  <path d="M7.8 14 V3.8 M4 7.4 L7.8 3.6 L11.6 7.4" fill="none" stroke="#dba23a" stroke-width="1.5"/>
  <circle cx="20" cy="7.9" r="5.4" fill="none" stroke="#d9485a" stroke-width="1.2"/>
</svg>
<div class="av" style="left:673px;top:507px">H</div>
<div class="nm" style="left:721px;top:505px;line-height:16px">Harold Smith</div>
<div class="tm" style="left:721px;top:525px;line-height:16px">6 minutes ago</div>
<div class="bd" style="left:673px;top:556.8px;line-height:16px"><span class="ln">@Trevor Smith</span> Check<br>availability.</div>

<div class="a" style="left:641px;top:639px;width:239px;height:1px;background:#1a1a1a"></div>
<div class="a ln" style="left:657px;top:656px;font-size:12.45px;line-height:16px">Leave Feedback</div>
<div id="bot"></div>
</body></html>
